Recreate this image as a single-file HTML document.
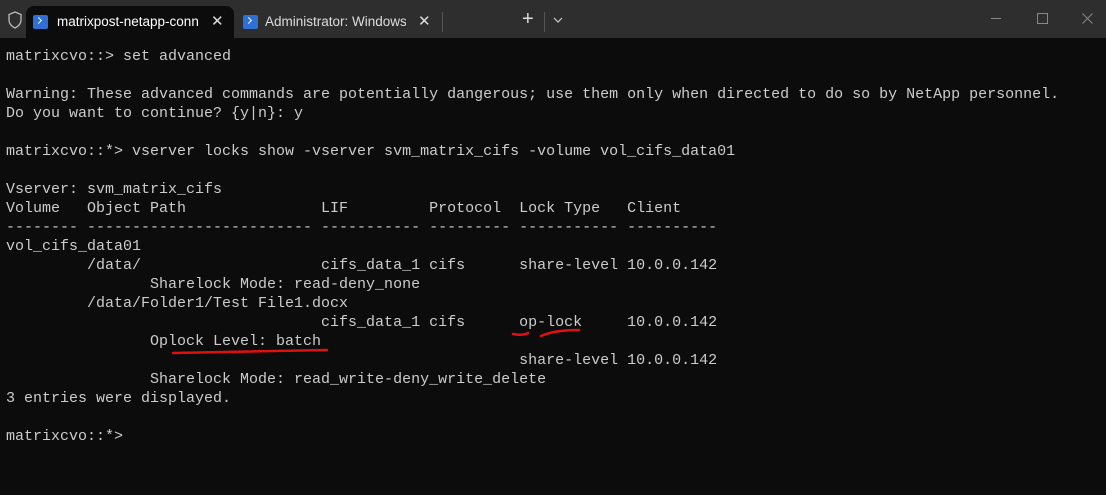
<!DOCTYPE html>
<html><head><style>
body{margin:0;width:1106px;height:495px;background:#0c0c0c;overflow:hidden;position:relative;font-family:"Liberation Sans",sans-serif}
.bar{position:absolute;left:0;top:0;width:1106px;height:38px;background:#2e2e2e}
.tab{position:absolute;top:6px;height:32px;border-radius:8px 8px 0 0;color:#fff;font-size:13.5px;line-height:32px}
.t1{left:26px;width:208px;background:#0c0c0c}
.t2{left:236px;width:200px;color:#ddd}
.ico{position:absolute;top:9px;width:15px;height:14px;background:#2f6fd6;border-radius:2px}
.ico:after{content:"";position:absolute;left:3px;top:3px;width:4px;height:4px;border-right:1.5px solid #fff;border-bottom:1.5px solid #fff;transform:rotate(-45deg)}
.x{position:absolute;top:0;color:#ddd;font-size:15px}
pre{position:absolute;left:6px;top:47px;margin:0;font-family:"Liberation Mono",monospace;font-size:15px;line-height:19px;color:#cccccc}
</style></head><body>
<div class="bar">
<svg style="position:absolute;left:7px;top:11px" width="16" height="18" viewBox="0 0 16 18"><path d="M8 1 L14 3.5 V9 C14 13 11 15.5 8 17 C5 15.5 2 13 2 9 V3.5 Z" fill="none" stroke="#bbb" stroke-width="1.3"/></svg>
<div class="tab t1"><div class="ico" style="left:7px"></div><span style="position:absolute;left:31px;white-space:nowrap;width:141px;overflow:hidden">matrixpost-netapp-connector</span><span class="x" style="left:185px">✕</span></div>
<div class="tab t2"><div class="ico" style="left:7px"></div><span style="position:absolute;left:29px;white-space:nowrap;width:141px;overflow:hidden">Administrator: Windows PowerShell</span><span class="x" style="left:182px">✕</span></div>
<div style="position:absolute;left:442px;top:12px;width:1px;height:20px;background:#555"></div>
<div style="position:absolute;left:522px;top:8px;color:#ddd;font-size:20px">+</div>
<div style="position:absolute;left:544px;top:12px;width:1px;height:20px;background:#555"></div>
<svg style="position:absolute;left:553px;top:17px" width="10" height="6"><path d="M1 1 L5 5 L9 1" fill="none" stroke="#ccc" stroke-width="1.2"/></svg>
<div style="position:absolute;left:991px;top:18px;width:10px;height:1px;background:#888"></div>
<div style="position:absolute;left:1037px;top:13px;width:9px;height:9px;border:1px solid #888"></div>
<svg style="position:absolute;left:1082px;top:13px" width="11" height="11"><path d="M0.5 0.5 L10.5 10.5 M10.5 0.5 L0.5 10.5" stroke="#888" stroke-width="1"/></svg>
</div>
<pre>matrixcvo::&gt; set advanced

Warning: These advanced commands are potentially dangerous; use them only when directed to do so by NetApp personnel.
Do you want to continue? {y|n}: y

matrixcvo::*&gt; vserver locks show -vserver svm_matrix_cifs -volume vol_cifs_data01

Vserver: svm_matrix_cifs
Volume   Object Path               LIF         Protocol  Lock Type   Client
-------- ------------------------- ----------- --------- ----------- ----------
vol_cifs_data01
         /data/                    cifs_data_1 cifs      share-level 10.0.0.142
                Sharelock Mode: read-deny_none
         /data/Folder1/Test File1.docx
                                   cifs_data_1 cifs      op-lock     10.0.0.142
                Oplock Level: batch
                                                         share-level 10.0.0.142
                Sharelock Mode: read_write-deny_write_delete
3 entries were displayed.

matrixcvo::*&gt;</pre>
<svg style="position:absolute;left:0;top:0" width="1106" height="495"><g fill="none" stroke="#e01010" stroke-width="2.5" stroke-linecap="round"><path d="M173 353 C220 352 280 351 327 350"/><path d="M513 334 C518 335 524 335 528 333"/><path d="M541 336 C552 331 565 330 579 330"/></g></svg>
</body></html>
